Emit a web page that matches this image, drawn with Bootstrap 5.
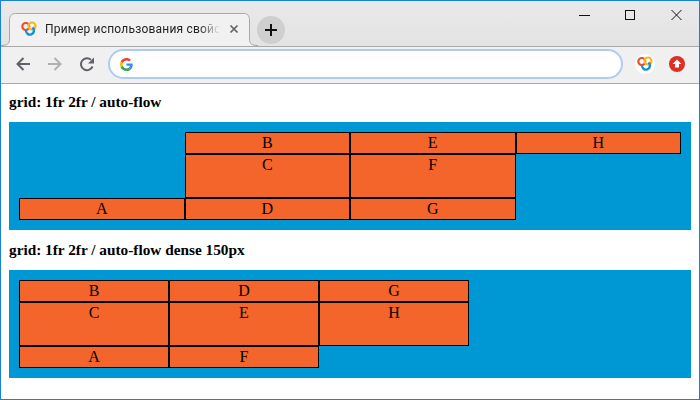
<!DOCTYPE html>
<html lang="ru">
<head>
<meta charset="utf-8">
<title>grid</title>
<link href="https://cdn.jsdelivr.net/npm/bootstrap@5.3.0/dist/css/bootstrap.min.css" rel="stylesheet">
<style>
html,body{margin:0;background:#fff;overflow:hidden}
.win{width:700px;height:400px;border:1px solid #1a82d6;display:flex;flex-direction:column;background:#fff;font-family:"Liberation Serif",serif;color:#000}
.tabbar{height:46px;flex:none;background:linear-gradient(#e9e9e9,#e3e3e3);border-bottom:1px solid #a9a9a9;padding:0 0 0 8px;font-family:"Roboto","Noto Sans",sans-serif}
.wtab{position:relative;width:241px;height:33px;margin-top:12px;margin-bottom:-1px;padding:0 10px 2px 12px;color:#222;white-space:nowrap}
.tabshape{position:absolute;left:-8px;top:0;width:257px;height:33px}
.tablabel{position:relative;width:175px;overflow:hidden;font-size:12px;letter-spacing:.2px;margin-left:8px;-webkit-mask-image:linear-gradient(90deg,#000 88%,transparent);mask-image:linear-gradient(90deg,#000 88%,transparent)}
.favi{position:relative;flex:none}
.tabx{position:relative;flex:none;margin-left:9px}
.newtab{width:28px;height:28px;border-radius:50%;background:#cfcfcf;margin:15px 0 0 7px}
.winctl{margin-left:auto;align-self:flex-start;padding-top:6px;gap:30px;padding-right:14px}
.toolbar{height:37px;flex:none;background:#f0f0f0;border-bottom:1px solid #a9a9a9;padding:0 14px 2px 14px}
.navs{gap:16px}
.addr{width:515px;height:30px;margin-left:13px;background:#fff;border:2px solid #aecbf5;border-radius:15px;padding-left:10px}
.exts{margin-left:auto;gap:14px}
.extbg{width:20px;height:20px;border-radius:50%;background:#fff}
.pagebody{flex:1;padding:9px 8px 0}
.ghead{font-size:15.3px;font-weight:700;line-height:18px;margin:0 0 11px}
.gbox{display:grid;background:#0098d4;padding:10px;height:108px;grid-template-rows:22px 44px 22px;grid-auto-flow:column;margin-bottom:11px}
.gbox.fluid{grid-auto-columns:1fr}
.gbox.dense{grid-auto-flow:column dense;grid-auto-columns:150px}
.cell{background:#f3652a;border:1px solid #000;text-align:center;font-size:16px;line-height:18px;padding-top:1px}
.cell.first{grid-row:3}
</style>
</head>
<body>
<div class="win">
  <div class="tabbar d-flex">
    <div class="wtab d-flex align-items-center">
      <svg class="tabshape" viewBox="0 0 257 33" aria-hidden="true"><path d="M0 32.500C6 32.500 8.500 31 8.500 26V7C8.500 3 10.500 .5 14.500 .5H243C246.500 .5 248.500 3 248.500 7V26C248.500 31 251 32.500 257 32.500V33H0Z" fill="#f1f1f1"/><path d="M0 32.500C6 32.500 8.500 31 8.500 26V7C8.500 3 10.500 .5 14.500 .5H243C246.500 .5 248.500 3 248.500 7V26C248.500 31 251 32.500 257 32.500" fill="none" stroke="#a9a9a9"/></svg>
      <svg class="favi" width="16" height="16" viewBox="0 0 16 16" aria-hidden="true"><circle cx="4.800" cy="5.500" r="3.500" fill="none" stroke="#e8502a" stroke-width="2.200"/><circle cx="11" cy="5" r="3.500" fill="none" stroke="#f6b921" stroke-width="2.200"/><path d="M11.500 6.500A4 4 0 1 1 5 9" fill="none" stroke="#1b8fd2" stroke-width="2.400"/></svg>
      <div class="tablabel">Пример использования свойства</div>
      <svg class="tabx" width="10" height="10" viewBox="0 0 10 10" aria-hidden="true"><path d="M1.500 1.500l7 7m0-7l-7 7" stroke="#5f6368" stroke-width="1.700"/></svg>
    </div>
    <div class="newtab d-flex align-items-center justify-content-center"><svg width="14" height="14" viewBox="0 0 14 14" aria-hidden="true"><path d="M7 1v12M1 7h12" stroke="#111" stroke-width="2"/></svg></div>
    <div class="winctl d-flex align-items-center">
      <svg width="16" height="16" viewBox="0 0 16 16" aria-hidden="true"><path d="M2 8.500h11" stroke="#111"/></svg>
      <svg width="16" height="16" viewBox="0 0 16 16" aria-hidden="true"><rect x="2.500" y="3.500" width="9" height="9" fill="none" stroke="#111"/></svg>
      <svg width="16" height="16" viewBox="0 0 16 16" aria-hidden="true"><path d="M2.500 3l10 10M12.500 3l-10 10" stroke="#111"/></svg>
    </div>
  </div>
  <div class="toolbar d-flex align-items-center">
    <div class="navs d-flex align-items-center">
      <svg width="16" height="16" viewBox="0 0 16 16" aria-hidden="true"><path d="M15 8H2.500M8.500 2L2.500 8l6 6" fill="none" stroke="#5f6368" stroke-width="2"/></svg>
      <svg width="16" height="16" viewBox="0 0 16 16" aria-hidden="true"><path d="M1 8h12.500M7.500 2l6 6-6 6" fill="none" stroke="#b0b1b3" stroke-width="2"/></svg>
      <svg width="16" height="16" viewBox="0 0 16 16" aria-hidden="true"><path d="M13.500 10.500A6 6 0 1 1 12 3.800" fill="none" stroke="#5f6368" stroke-width="2"/><path d="M15 1.500v6H9z" fill="#5f6368"/></svg>
    </div>
    <div class="addr d-flex align-items-center">
      <svg width="13" height="13" viewBox="0 0 48 48" aria-hidden="true"><path fill="#EA4335" d="M24 9.500c3.500 0 6.700 1.200 9.200 3.600l6.900-6.900C35.900 2.400 30.500 0 24 0 14.600 0 6.500 5.400 2.600 13.200l8 6.200C12.500 13.700 17.800 9.500 24 9.500z"/><path fill="#4285F4" d="M47 24.500c0-1.600-.2-3.100-.4-4.500H24v9h12.900c-.6 3-2.200 5.500-4.800 7.200l7.700 6C44.400 38 47 31.800 47 24.500z"/><path fill="#FBBC05" d="M10.500 28.600a14.500 14.500 0 0 1 0-9.200l-8-6.200a24 24 0 0 0 0 21.600z"/><path fill="#34A853" d="M24 48c6.500 0 11.900-2.100 15.900-5.800l-7.700-6c-2.200 1.500-4.900 2.300-8.200 2.300-6.200 0-11.500-4.200-13.400-9.900l-8 6.200C6.500 42.600 14.600 48 24 48z"/></svg>
    </div>
    <div class="exts d-flex align-items-center">
      <div class="extbg d-flex align-items-center justify-content-center"><svg width="16" height="16" viewBox="0 0 16 16" aria-hidden="true"><circle cx="4.800" cy="5.500" r="3.500" fill="none" stroke="#e8502a" stroke-width="2.200"/><circle cx="11" cy="5" r="3.500" fill="none" stroke="#f6b921" stroke-width="2.200"/><path d="M11.500 6.500A4 4 0 1 1 5 9" fill="none" stroke="#1b8fd2" stroke-width="2.400"/></svg></div>
      <svg width="16" height="16" viewBox="0 0 16 16" aria-hidden="true"><circle cx="8" cy="8" r="8" fill="#dd3024"/><path d="M8 3.500L12.500 8H10v3.500H6V8H3.500z" fill="#fff"/></svg>
    </div>
  </div>
  <div class="pagebody">
    <p class="ghead">grid: 1fr 2fr / auto-flow</p>
    <div class="gbox fluid">
      <div class="cell first">A</div><div class="cell">B</div><div class="cell">C</div><div class="cell">D</div><div class="cell">E</div><div class="cell">F</div><div class="cell">G</div><div class="cell">H</div>
    </div>
    <p class="ghead">grid: 1fr 2fr / auto-flow dense 150px</p>
    <div class="gbox dense">
      <div class="cell first">A</div><div class="cell">B</div><div class="cell">C</div><div class="cell">D</div><div class="cell">E</div><div class="cell">F</div><div class="cell">G</div><div class="cell">H</div>
    </div>
  </div>
</div>
<script src="https://cdn.jsdelivr.net/npm/bootstrap@5.3.0/dist/js/bootstrap.bundle.min.js"></script>
</body>
</html>
